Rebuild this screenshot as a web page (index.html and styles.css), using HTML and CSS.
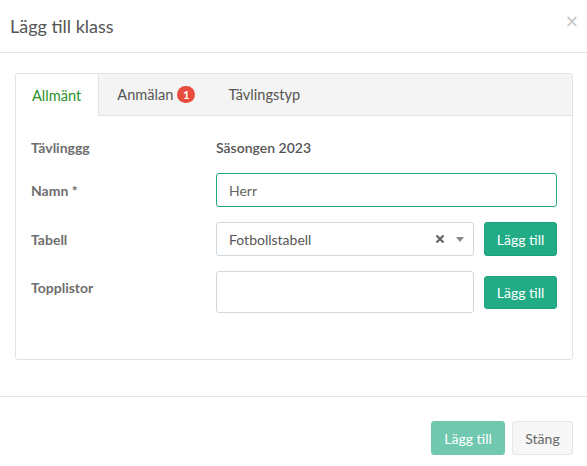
FILE: index.html
```html
<!DOCTYPE html>
<html lang="sv">
<head>
<meta charset="utf-8">
<title>Lägg till klass</title>
<link rel="stylesheet" href="styles.css">
</head>
<body>
<div class="modal">
  <div class="modal-header">
    <h4 class="modal-title">Lägg till klass</h4>
    <button class="close" type="button">×</button>
  </div>
  <div class="modal-body">
    <div class="panel">
      <ul class="tabs">
        <li class="tab active">Allmänt</li>
        <li class="tab">Anmälan <span class="badge">1</span></li>
        <li class="tab">Tävlingstyp</li>
      </ul>
      <div class="panel-body">
        <div class="row row-static">
          <div class="label">Tävlinggg</div>
          <div class="value static">Säsongen 2023</div>
        </div>
        <div class="row">
          <div class="label">Namn *</div>
          <div class="value"><input class="input focus" type="text" value="Herr"></div>
        </div>
        <div class="row">
          <div class="label">Tabell</div>
          <div class="value with-btn">
            <div class="select">
              <span class="select-text">Fotbollstabell</span>
              <svg class="select-clear" width="10" height="10" viewBox="0 0 10 10"><path d="M1.5 1.5 L8.5 8.5 M8.5 1.5 L1.5 8.5" stroke="#666" stroke-width="2.2" stroke-linecap="butt"/></svg>
              <span class="select-arrow"></span>
            </div>
            <button class="btn btn-green" type="button">Lägg till</button>
          </div>
        </div>
        <div class="row row-tall">
          <div class="label">Topplistor</div>
          <div class="value with-btn">
            <div class="select tall"></div>
            <button class="btn btn-green" type="button">Lägg till</button>
          </div>
        </div>
      </div>
    </div>
  </div>
  <div class="modal-footer">
    <button class="btn btn-green disabled" type="button">Lägg till</button>
    <button class="btn btn-default" type="button">Stäng</button>
  </div>
</div>
</body>
</html>
```

FILE: styles.css
```css
* { box-sizing: border-box; }
html, body {
  margin: 0;
  padding: 0;
  background: #fff;
  font-family: Lato, "Liberation Sans", sans-serif;
  font-size: 14px;
  color: #555;
}
.modal { width: 587px; }
.modal-header {
  display: flex;
  align-items: center;
  justify-content: space-between;
  padding: 15px 10px 15px 10px;
  border-bottom: 1px solid #e5e5e5;
  height: 53px;
}
.modal-title {
  margin: 0;
  font-size: 18px;
  font-weight: 400;
  line-height: 22px;
  color: #555;
}
.close {
  border: 0;
  background: none;
  padding: 0;
  margin-right: -2px;
  font-family: "DejaVu Sans", sans-serif;
  font-size: 17px;
  line-height: 1;
  color: #c4c4c4;
  margin-top: -9px;
}
.modal-body {
  padding: 20px 14px 36px 15px;
}
.panel {
  border: 1px solid #e3e3e3;
  border-radius: 3px;
}
.tabs {
  list-style: none;
  margin: 0;
  padding: 0;
  display: flex;
  height: 42px;
  background: #f4f4f4;
  border-bottom: 1px solid #e3e3e3;
}
.tab {
  display: flex;
  align-items: center;
  padding: 0 17px;
  color: #555;
  font-size: 14.6px;
  height: 41px;
}
.tab:first-child { padding-left: 16px; padding-right: 17px; }
.tab.active {
  background: #fff;
  color: #2a922a;
  border-right: 1px solid #e3e3e3;
  height: 42px;
}
.tab:nth-child(2) { padding-left: 18px; padding-right: 16px; }
.badge {
  display: inline-flex;
  align-items: center;
  justify-content: center;
  margin-left: 4px;
  width: 18px;
  height: 17px;
  border-radius: 9px;
  background: #e74c3c;
  color: #fff;
  font-size: 11.5px;
  font-weight: 700;
}
.panel-body {
  padding: 22px 14px 46px 15px;
  display: flex;
  flex-direction: column;
  gap: 15px;
}
.row {
  display: grid;
  grid-template-columns: 185px 341px;
  align-items: center;
  min-height: 34px;
}
.row-static { min-height: 20px; line-height: 20px; }
.row-tall { min-height: 42px; }
.row-tall .label {
  align-self: start;
  line-height: 34px;
}
.label {
  font-weight: 700;
  color: #6e6e6e;
}
.value.static { color: #555; font-weight: 600; }
.input {
  display: block;
  width: 341px;
  height: 34px;
  border: 1px solid #cfd8df;
  border-radius: 3px;
  padding: 0 12px;
  font-family: inherit;
  font-size: 14px;
  color: #666;
  outline: none;
}
.input.focus { border-color: #20a882; }
.with-btn {
  display: flex;
  align-items: center;
  gap: 10px;
}
.select {
  width: 258px;
  height: 34px;
  border: 1px solid #cfd8df;
  border-radius: 3px;
  display: flex;
  align-items: center;
  padding: 0 9px 0 12px;
  color: #555;
}
.select.tall { height: 42px; }
.select-text { flex: 1; }
.select-clear {
  display: block;
  margin-right: 11px;
}
.select-arrow {
  width: 0;
  height: 0;
  border-left: 4px solid transparent;
  border-right: 4px solid transparent;
  border-top: 5px solid #888;
}
.btn {
  font-family: inherit;
  font-size: 14px;
  border-radius: 3px;
  height: 34px;
  padding: 0 11px;
  cursor: pointer;
}
.btn-green {
  background: #22ac86;
  border: 1px solid #1ea07c;
  color: #fff;
  width: 73px;
  padding: 0;
}
.row-tall .btn-green { height: 33px; }
.btn-green.disabled {
  background: #70c9ae;
  border-color: #70c9ae;
  width: 74px;
}
.btn-default {
  background: #f7f7f7;
  border: 1px solid #e6e6e6;
  color: #666;
  width: 61px;
  padding: 0;
}
.modal-footer {
  border-top: 1px solid #e5e5e5;
  display: flex;
  justify-content: flex-end;
  gap: 7px;
  padding: 24px 14px 12px 15px;
}
```
